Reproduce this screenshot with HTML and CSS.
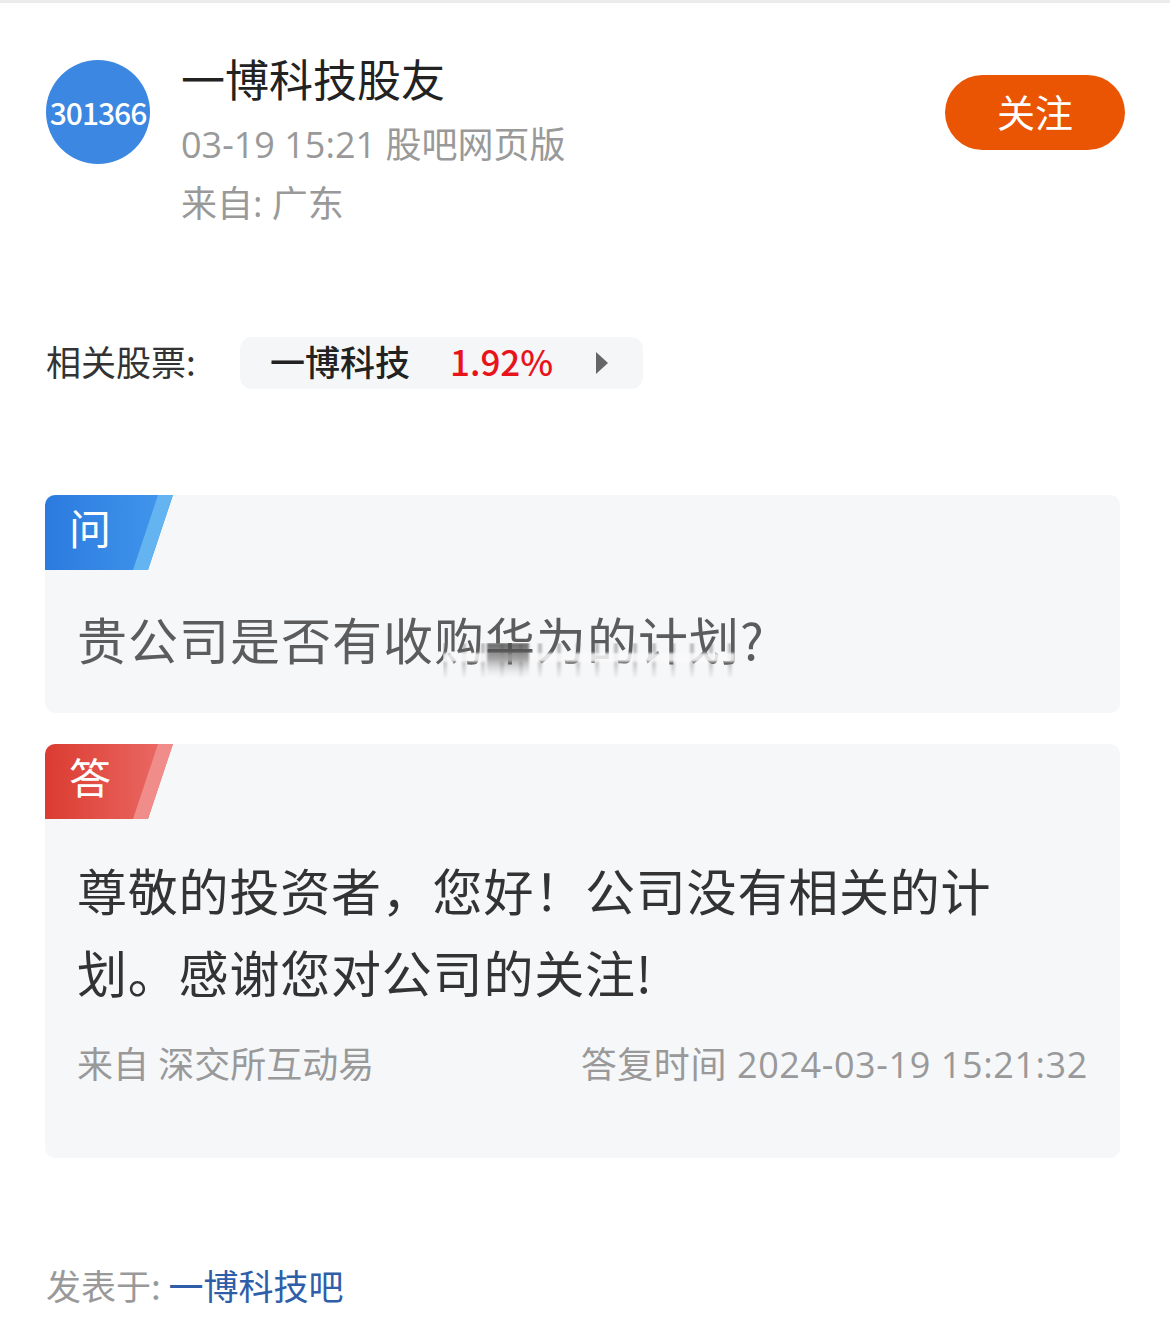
FILE: index.html
```html
<!DOCTYPE html>
<html lang="zh-CN">
<head>
    <meta charset="UTF-8">
    <meta name="viewport" content="width=device-width, initial-scale=1.0">
    <title>一博科技股友</title>
    <link rel="stylesheet" href="styles.css">
</head>
<body>
    <div class="top-line"></div>

    <div class="post-header">
        <div class="avatar">301366</div>
        <div class="author">
            <div class="author-name">一博科技股友</div>
            <div class="author-meta">03-19 15:21 股吧网页版</div>
            <div class="author-meta from">来自: 广东</div>
        </div>
        <button class="follow-btn">关注</button>
    </div>

    <div class="related">
        <span class="related-label">相关股票:</span>
        <div class="stock-pill">
            <span class="stock-name">一博科技</span>
            <span class="stock-change">1.92%</span>
            <span class="stock-arrow"></span>
        </div>
    </div>

    <div class="qa-card">
        <div class="qa-tag ask">问</div>
        <div class="question">贵公司是否有收购华为的计划?<span class="smudge"></span></div>
    </div>

    <div class="qa-card">
        <div class="qa-tag reply">答</div>
        <div class="answer">尊敬的投资者，您好！公司没有相关的计划。感谢您对公司的关注!</div>
        <div class="answer-footer">
            <span>来自 深交所互动易</span>
            <span class="reply-time">答复时间 2024-03-19 15:21:32</span>
        </div>
    </div>

    <div class="posted-in">发表于: <a href="#">一博科技吧</a></div>
</body>
</html>
```

FILE: styles.css
```css
body {
    margin: 0;
    padding: 0;
    background-color: #fff;
    font-family: "Noto Sans CJK SC", "Noto Sans", sans-serif;
    color: #222;
    width: 1170px;
}

.top-line {
    height: 3px;
    background-color: #ebebeb;
}

/* header */
.post-header {
    display: flex;
    align-items: flex-start;
    padding: 47px 45px 0 46px;
}

.avatar {
    width: 104px;
    height: 104px;
    margin-top: 10px;
    border-radius: 50%;
    background-color: #3b87e1;
    color: #fff;
    font-size: 30px;
    font-weight: 500;
    letter-spacing: -1px;
    display: flex;
    align-items: center;
    justify-content: center;
    flex-shrink: 0;
}

.author {
    margin-left: 31px;
    flex: 1;
}

.author-name {
    font-size: 44px;
    line-height: 56px;
    color: #222;
}

.author-meta {
    font-family: "Open Sans", "Noto Sans CJK SC", sans-serif;
    font-size: 36px;
    line-height: 58px;
    height: 58px;
    margin-top: 10px;
    color: #999;
}

.author-meta.from {
    margin-top: 0;
    line-height: 60px;
    height: 56px;
}

.follow-btn {
    margin-top: 25px;
    width: 180px;
    height: 75px;
    padding: 0 0 4px;
    border: none;
    border-radius: 38px;
    background-color: #ea5504;
    color: #fff;
    font-family: inherit;
    font-size: 38px;
    cursor: pointer;
}

/* related stock */
.related {
    display: flex;
    align-items: center;
    height: 52px;
    margin-top: 107px;
    padding-left: 46px;
}

.related-label {
    font-size: 35px;
    color: #333;
    width: 194px;
    margin-bottom: 6px;
}

.stock-pill {
    display: flex;
    align-items: center;
    height: 52px;
    padding: 0 35px 0 30px;
    background-color: #f5f6f8;
    border-radius: 12px;
    font-size: 35px;
    font-weight: 500;
}

.stock-name {
    color: #222;
    margin-bottom: 6px;
}

.stock-change {
    color: #e8141b;
    margin: 0 0 6px 40px;
}

.stock-arrow {
    width: 0;
    height: 0;
    margin-left: 43px;
    border-top: 11px solid transparent;
    border-bottom: 11px solid transparent;
    border-left: 12px solid #666;
}

/* q & a cards */
.qa-card {
    margin: 106px 0 0 45px;
    width: 1075px;
    background-color: #f6f7f9;
    border-radius: 10px;
    overflow: hidden;
}

.qa-card + .qa-card {
    margin-top: 31px;
}

.qa-tag {
    position: relative;
    width: 128px;
    height: 75px;
    line-height: 64px;
    padding-left: 24px;
    box-sizing: border-box;
    color: #fff;
    font-size: 42px;
    clip-path: polygon(0 0, 128px 0, 103px 75px, 0 75px);
}

.qa-tag::after {
    content: "";
    position: absolute;
    top: 0;
    left: 0;
    width: 128px;
    height: 75px;
    clip-path: polygon(113px 0, 128px 0, 103px 75px, 88px 75px);
}

.qa-tag.ask {
    background: linear-gradient(90deg, #2b7adf, #4398ec);
}

.qa-tag.ask::after {
    background-color: #63b4f0;
}

.qa-tag.reply {
    background: linear-gradient(90deg, #db3b30, #eb6d68);
}

.qa-tag.reply::after {
    background-color: #f08c8a;
}

.question {
    position: relative;
    margin-top: 33px;
    padding: 0 32px 40px;
    font-size: 50px;
    line-height: 70px;
    letter-spacing: 1px;
    color: #5c5c5c;
}

/* screenshot artefact smeared over the question text */
.smudge {
    position: absolute;
    left: 398px;
    top: 40px;
    width: 292px;
    height: 36px;
    background:
        linear-gradient(180deg, rgba(80, 80, 80, 0.85), rgba(150, 150, 150, 0.15)) 44px 0 / 42px 34px no-repeat,
        linear-gradient(rgba(250, 250, 251, 0.85), rgba(250, 250, 251, 0.85)) 0 10px / 292px 9px no-repeat,
        repeating-linear-gradient(90deg, rgba(100, 100, 100, 0.4) 0 4px, rgba(246, 247, 249, 0) 4px 19px);
    -webkit-mask-image: linear-gradient(180deg, #000 45%, transparent);
    mask-image: linear-gradient(180deg, #000 45%, transparent);
    filter: blur(1.2px);
}

.answer {
    margin-top: 29px;
    padding: 0 32px;
    max-width: 940px;
    font-size: 50px;
    line-height: 82px;
    letter-spacing: 0.8px;
    color: #333;
}

.answer-footer {
    display: flex;
    justify-content: space-between;
    margin-top: 33px;
    padding: 0 32px 73px;
    font-family: "Open Sans", "Noto Sans CJK SC", sans-serif;
    font-size: 36px;
    line-height: 40px;
    color: #999;
}

.reply-time {
    letter-spacing: 0.6px;
}

/* footer */
.posted-in {
    margin-top: 102px;
    padding-left: 46px;
    font-size: 35px;
    line-height: 50px;
    color: #999;
}

.posted-in a {
    color: #2e5ea8;
    text-decoration: none;
}
```
